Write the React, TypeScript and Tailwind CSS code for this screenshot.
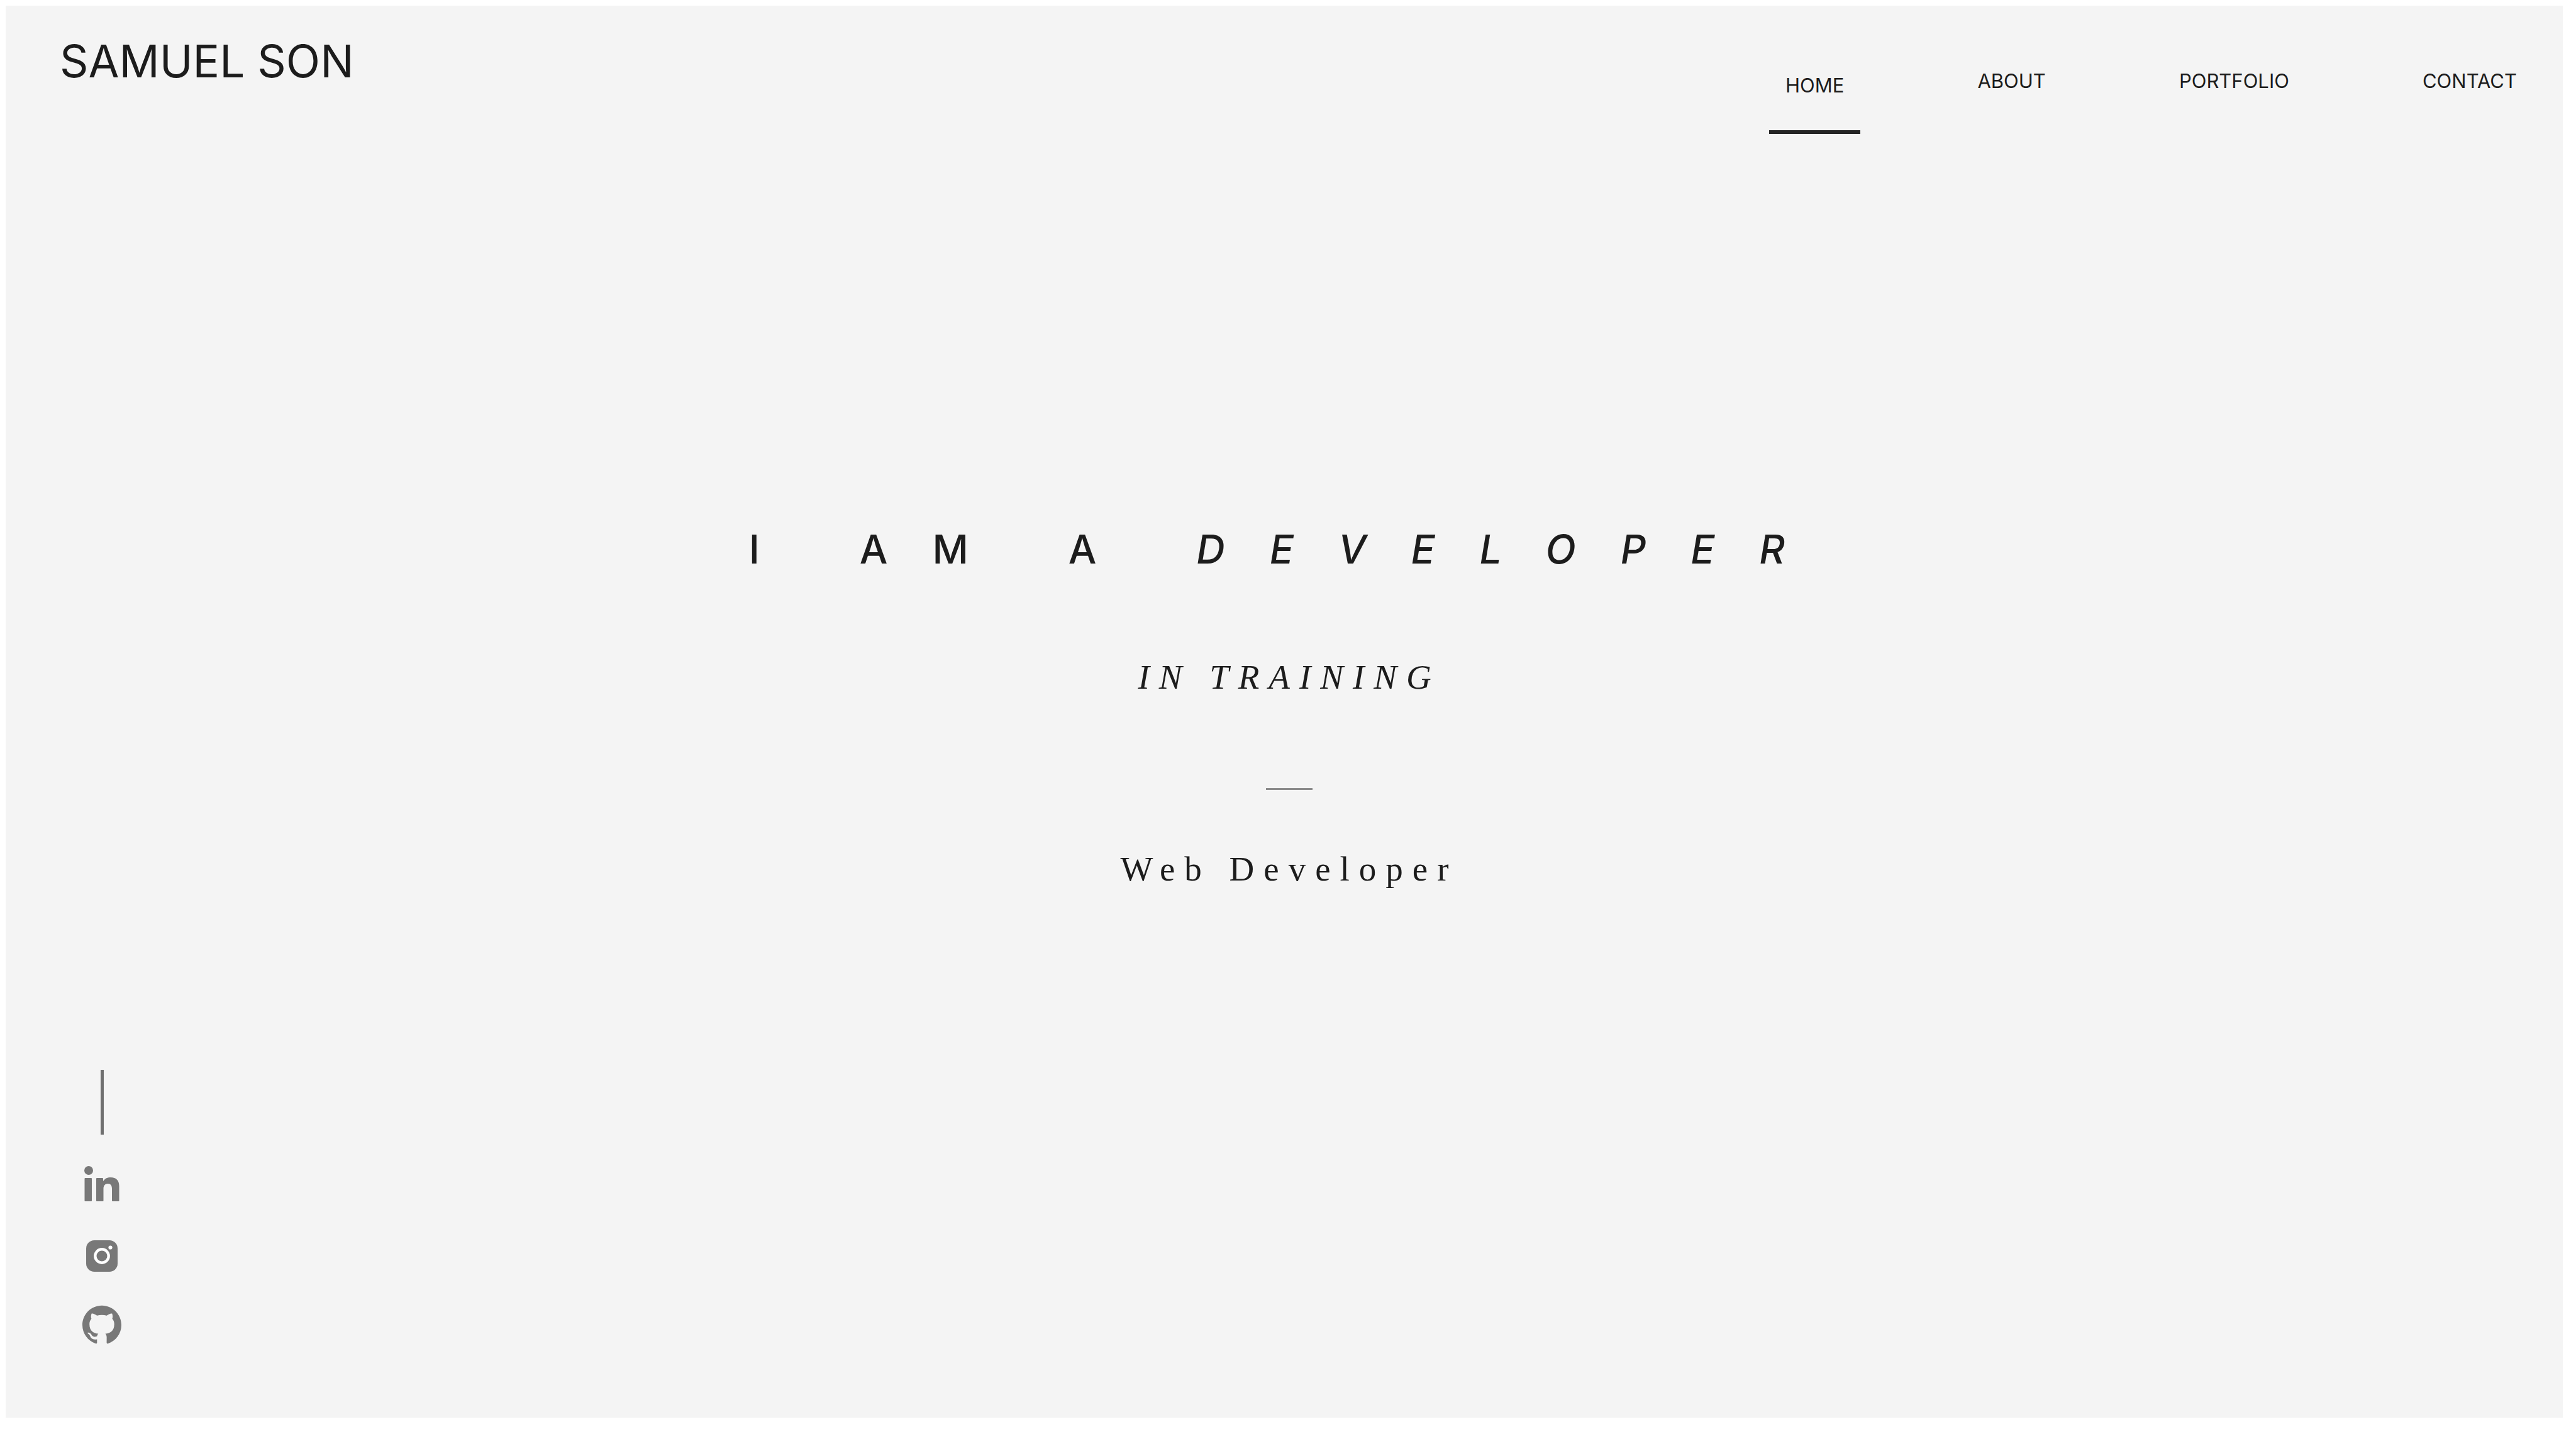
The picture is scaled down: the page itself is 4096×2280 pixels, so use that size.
const navItems = [
  { label: 'ABOUT', href: '#about' },
  { label: 'PORTFOLIO', href: '#portfolio' },
  { label: 'CONTACT', href: '#contact' },
];

function LinkedInIcon() {
  return (
    <svg viewBox="0 0 56 56" className="size-14" fill="currentColor" aria-hidden="true">
      <circle cx="7" cy="7" r="7" />
      <path d="M0.500 20Q0.500 19 1.500 19H11Q12 19 12 20V55Q12 56 11 56H1.500Q0.500 56 0.500 55Z" />
      <path d="M19 20Q19 19 20 19H29Q30 19 30 20V24C33 19.500 37 18 42 18C51 18 55.500 23 55.500 32V55Q55.500 56 54.500 56H45Q44 56 44 55V36C44 31 42 28 37.500 28C33 28 30.500 31 30.500 36V55Q30.500 56 29.500 56H20Q19 56 19 55Z" />
    </svg>
  );
}

function InstagramIcon() {
  return (
    <svg viewBox="0 0 50 50" className="size-[50px]" aria-hidden="true">
      <rect width="50" height="50" rx="13" fill="currentColor" />
      <circle cx="25" cy="25" r="10.700" fill="none" stroke="#ffffff" strokeWidth="4.400" />
      <circle cx="38.500" cy="11.500" r="3.100" fill="#ffffff" />
    </svg>
  );
}

function GitHubIcon() {
  return (
    <svg viewBox="0 0 24 24" className="size-[62px]" fill="currentColor" aria-hidden="true">
      <path d="M12 .297c-6.630 0-12 5.373-12 12 0 5.303 3.438 9.800 8.205 11.385.6.113.82-.258.82-.577 0-.285-.01-1.040-.015-2.040-3.338.724-4.042-1.610-4.042-1.610C4.422 18.070 3.633 17.700 3.633 17.700c-1.087-.744.084-.729.084-.729 1.205.084 1.838 1.236 1.838 1.236 1.070 1.835 2.809 1.305 3.495.998.108-.776.417-1.305.76-1.605-2.665-.3-5.466-1.332-5.466-5.930 0-1.310.465-2.380 1.235-3.220-.135-.303-.54-1.523.105-3.176 0 0 1.005-.322 3.300 1.230.96-.267 1.980-.399 3-.405 1.020.006 2.040.138 3 .405 2.280-1.552 3.285-1.230 3.285-1.230.645 1.653.24 2.873.12 3.176.765.84 1.230 1.910 1.230 3.220 0 4.610-2.805 5.625-5.475 5.920.42.36.81 1.096.81 2.220 0 1.606-.015 2.896-.015 3.286 0 .315.21.69.825.57C20.565 22.092 24 17.592 24 12.297c0-6.627-5.373-12-12-12" />
    </svg>
  );
}

export default function App() {
  return (
    <div className="flex min-h-screen bg-white pt-[9px] pr-[21px] pb-[26px] pl-[9px] font-['Inter',sans-serif] text-[#1c1c1c]">
      <div className="flex flex-1 flex-col bg-[#f4f4f4]">
        <header className="flex items-start justify-between pr-[47px] pl-[86px]">
          <a href="#home" className="mt-12 text-[71px] leading-[80px]">
            SAMUEL SON
          </a>
          <nav className="mt-9 flex items-center gap-40 text-[31px] leading-[40px]">
            <a href="#home" aria-current="page" className="border-b-6 border-[#242424] px-[26px] pt-[71px] pb-[51px]">
              HOME
            </a>
            {navItems.map((item) => (
              <a key={item.label} href={item.href} className="px-[26px]">
                {item.label}
              </a>
            ))}
          </nav>
        </header>

        <main className="flex flex-1 flex-col items-center justify-center pt-[334px] pl-4">
          <h1 className="text-[63px] leading-[72px] font-medium tracking-[71px] whitespace-nowrap">
            I AM A <em className="italic">DEVELOPER</em>
          </h1>
          <p className="mt-[138px] font-['Liberation_Serif',serif] text-[55px] leading-[60px] tracking-[15px] italic">
            IN TRAINING
          </p>
          <hr className="mt-[146px] h-[3px] w-[74px] border-0 bg-[#8a8a8a]" />
          <p className="mt-24 font-['Liberation_Serif',serif] text-[55px] leading-[60px] tracking-[15px]">
            Web Developer
          </p>
        </main>

        <aside className="flex flex-col items-center self-start pb-[117px] pl-[122px] text-[#787878]">
          <div className="h-[103px] w-[5px] bg-[#6f6f6f]" />
          <a href="#linkedin" aria-label="LinkedIn" className="mt-[50px]">
            <LinkedInIcon />
          </a>
          <a href="#instagram" aria-label="Instagram" className="mt-[62px]">
            <InstagramIcon />
          </a>
          <a href="#github" aria-label="GitHub" className="mt-[53px]">
            <GitHubIcon />
          </a>
        </aside>
      </div>
    </div>
  );
}
